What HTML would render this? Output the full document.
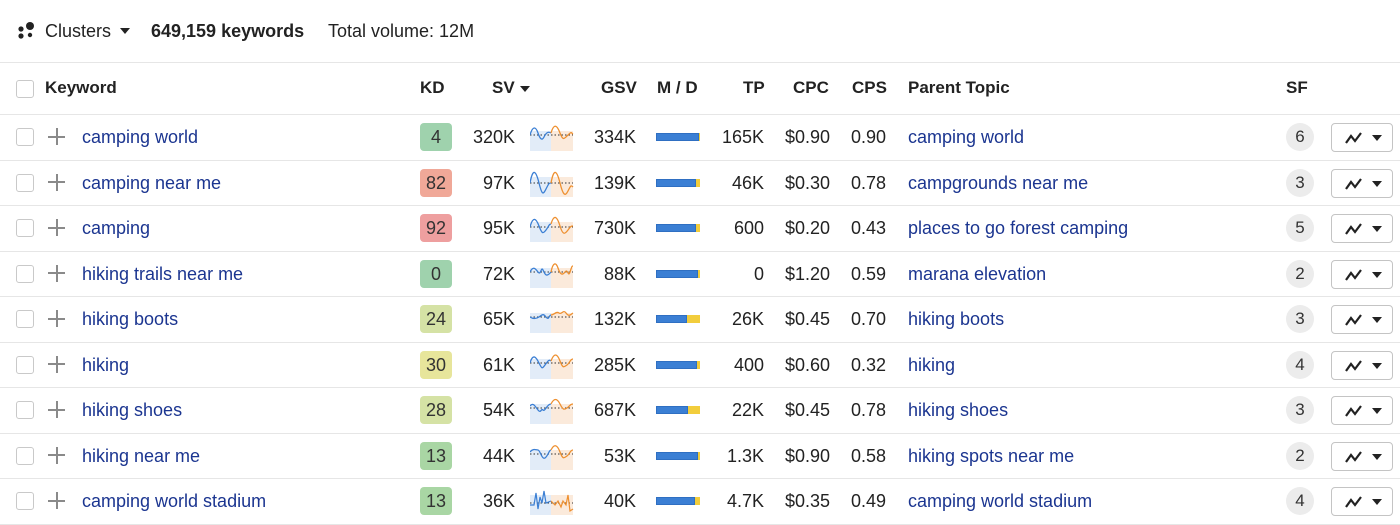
<!DOCTYPE html>
<html><head><meta charset="utf-8"><style>
*{margin:0;padding:0;box-sizing:border-box}
body{width:1400px;height:525px;background:#fff;font-family:"Liberation Sans",Arial,sans-serif;color:#222;position:relative;overflow:hidden;font-size:18px}
.a{position:absolute}
.top{top:0;left:0;width:1400px;height:63px;border-bottom:1px solid #e6e6e6}
.hdr{top:63px;left:0;width:1400px;height:52px;border-bottom:1px solid #e6e6e6;font-weight:bold;font-size:17px}
.row{left:0;width:1400px;height:45.5px;border-bottom:1px solid #e6e6e6}
.cb{left:16px;width:18px;height:18px;border:1px solid #c9c9c9;border-radius:3px;top:50%;margin-top:-9px}
.plus{left:48px;top:50%;margin-top:-9px;width:17px;height:17px}
.plus:before{content:"";position:absolute;left:0;top:7.5px;width:17px;height:2px;background:#8a8a8a}
.plus:after{content:"";position:absolute;left:7.5px;top:0;width:2px;height:17px;background:#8a8a8a}
.kw{left:82px;top:50%;margin-top:-11px;color:#1b3590;line-height:22px}
.kd{left:420px;width:32px;height:28px;top:50%;margin-top:-14px;border-radius:4px;text-align:center;line-height:28px;color:#333}
.r{text-align:right;top:50%;margin-top:-11px;line-height:22px}
.sv{left:445px;width:70px}
.gsv{left:566px;width:70px}
.tp{left:694px;width:70px}
.cpc{left:760px;width:70px}
.cps{left:826px;width:60px}
.sp{left:530px;top:50%;margin-top:-14px}
.bar{left:656px;top:50%;margin-top:-4px;width:44px;height:8px;background:#f2cd3c}
.bar i{display:block;height:8px;background:#3b7fd4;border:1px solid #2f6fc2}
.pt{left:908px;top:50%;margin-top:-11px;color:#1b3590;line-height:22px}
.sf{left:1286px;width:28px;height:28px;border-radius:50%;background:#ececec;top:50%;margin-top:-14px;text-align:center;line-height:28px;color:#333;font-size:17px}
.btn{left:1331px;width:62px;height:29px;top:50%;margin-top:-14px;border:1px solid #c4c4c4;border-radius:4px}
.btn svg{position:absolute;left:12px;top:7px}
.btn b{position:absolute;left:40px;top:11px;border-left:5px solid transparent;border-right:5px solid transparent;border-top:6px solid #222}
</style></head><body>
<div class="a top">
<svg class="a" style="left:17px;top:21px" width="20" height="18"><circle cx="13" cy="5" r="4" fill="#222"/><circle cx="4" cy="8" r="2.6" fill="#222"/><circle cx="4" cy="15" r="2.6" fill="#222"/><circle cx="13" cy="14" r="2.2" fill="#222"/></svg>
<div class="a" style="left:45px;top:20px;line-height:22px">Clusters</div>
<div class="a" style="left:120px;top:28px;border-left:5px solid transparent;border-right:5px solid transparent;border-top:6px solid #222"></div>
<div class="a" style="left:151px;top:20px;line-height:22px;font-weight:bold">649,159 keywords</div>
<div class="a" style="left:328px;top:20px;line-height:22px">Total volume: 12M</div>
</div>
<div class="a hdr">
<div class="a cb" style="top:26px"></div>
<div class="a" style="left:45px;top:15px;line-height:20px">Keyword</div>
<div class="a" style="left:420px;top:15px;line-height:20px">KD</div>
<div class="a" style="left:492px;top:15px;line-height:20px">SV</div>
<div class="a" style="left:520px;top:23px;border-left:5px solid transparent;border-right:5px solid transparent;border-top:6px solid #222"></div>
<div class="a" style="left:601px;top:15px;line-height:20px">GSV</div>
<div class="a" style="left:657px;top:15px;line-height:20px">M / D</div>
<div class="a" style="left:743px;top:15px;line-height:20px">TP</div>
<div class="a" style="left:793px;top:15px;line-height:20px">CPC</div>
<div class="a" style="left:852px;top:15px;line-height:20px">CPS</div>
<div class="a" style="left:908px;top:15px;line-height:20px">Parent Topic</div>
<div class="a" style="left:1286px;top:15px;line-height:20px">SF</div>
</div>

<div class="a row" style="top:115px"><div class="a cb"></div><div class="a plus"></div><div class="a kw">camping world</div><div class="a kd" style="background:#9fd2ad">4</div><div class="a r sv">320K</div>
<svg class="a sp" width="44" height="28"><rect x="0" y="8" width="21" height="20" fill="#e2ecf8"/><rect x="21" y="8" width="22" height="20" fill="#fbeadb"/><path d="M0 12 L43 12" stroke="#333" stroke-dasharray="1.5 2" stroke-width="1"/><path d="M0 12 C3 2,6 4,8 10 S12 18,14 14 S18 8,21 10" fill="none" stroke="#3b7fd4" stroke-width="1.3"/><path d="M21 10 C24 0,27 2,30 10 S34 16,38 12 S41 10,43 11" fill="none" stroke="#ee9030" stroke-width="1.3"/></svg>
<div class="a r gsv">334K</div><div class="a bar"><i style="width:43px"></i></div><div class="a r tp">165K</div><div class="a r cpc">$0.90</div><div class="a r cps">0.90</div><div class="a pt">camping world</div><div class="a sf">6</div><div class="a btn"><svg width="20" height="14"><path d="M2 12 L7 5 L11 10 L17 2" fill="none" stroke="#222" stroke-width="2.2"/></svg><b></b></div></div>

<div class="a row" style="top:160.5px"><div class="a cb"></div><div class="a plus"></div><div class="a kw">camping near me</div><div class="a kd" style="background:#f0a898">82</div><div class="a r sv">97K</div>
<svg class="a sp" width="44" height="28"><rect x="0" y="8" width="21" height="20" fill="#e2ecf8"/><rect x="21" y="8" width="22" height="20" fill="#fbeadb"/><path d="M0 14 L43 14" stroke="#333" stroke-dasharray="1.5 2"/><path d="M0 14 C3 -2,6 2,9 14 S13 26,16 20 S19 14,21 14" fill="none" stroke="#3b7fd4" stroke-width="1.3"/><path d="M21 14 C24 -2,27 2,30 14 S35 28,38 22 S41 16,43 18" fill="none" stroke="#ee9030" stroke-width="1.3"/></svg>
<div class="a r gsv">139K</div><div class="a bar"><i style="width:40px"></i></div><div class="a r tp">46K</div><div class="a r cpc">$0.30</div><div class="a r cps">0.78</div><div class="a pt">campgrounds near me</div><div class="a sf">3</div><div class="a btn"><svg width="20" height="14"><path d="M2 12 L7 5 L11 10 L17 2" fill="none" stroke="#222" stroke-width="2.2"/></svg><b></b></div></div>

<div class="a row" style="top:206px"><div class="a cb"></div><div class="a plus"></div><div class="a kw">camping</div><div class="a kd" style="background:#ee9f9f">92</div><div class="a r sv">95K</div>
<svg class="a sp" width="44" height="28"><rect x="0" y="8" width="21" height="20" fill="#e2ecf8"/><rect x="21" y="8" width="22" height="20" fill="#fbeadb"/><path d="M0 13 L43 13" stroke="#333" stroke-dasharray="1.5 2"/><path d="M0 13 C3 2,6 4,9 12 S13 20,16 16 S19 10,21 10" fill="none" stroke="#3b7fd4" stroke-width="1.3"/><path d="M21 10 C24 0,27 2,30 12 S35 20,38 16 S41 12,43 12" fill="none" stroke="#ee9030" stroke-width="1.3"/></svg>
<div class="a r gsv">730K</div><div class="a bar"><i style="width:40px"></i></div><div class="a r tp">600</div><div class="a r cpc">$0.20</div><div class="a r cps">0.43</div><div class="a pt">places to go forest camping</div><div class="a sf">5</div><div class="a btn"><svg width="20" height="14"><path d="M2 12 L7 5 L11 10 L17 2" fill="none" stroke="#222" stroke-width="2.2"/></svg><b></b></div></div>

<div class="a row" style="top:251.5px"><div class="a cb"></div><div class="a plus"></div><div class="a kw">hiking trails near me</div><div class="a kd" style="background:#9fd2ad">0</div><div class="a r sv">72K</div>
<svg class="a sp" width="44" height="28"><rect x="0" y="8" width="21" height="20" fill="#e2ecf8"/><rect x="21" y="8" width="22" height="20" fill="#fbeadb"/><path d="M0 12 L43 12" stroke="#333" stroke-dasharray="1.5 2"/><path d="M0 12 C3 6,5 8,8 12 S11 6,13 10 S16 18,21 12" fill="none" stroke="#3b7fd4" stroke-width="1.3"/><path d="M21 12 C23 2,26 2,28 8 S32 16,35 12 S38 18,40 12 S42 6,43 6" fill="none" stroke="#ee9030" stroke-width="1.3"/></svg>
<div class="a r gsv">88K</div><div class="a bar"><i style="width:42px"></i></div><div class="a r tp">0</div><div class="a r cpc">$1.20</div><div class="a r cps">0.59</div><div class="a pt">marana elevation</div><div class="a sf">2</div><div class="a btn"><svg width="20" height="14"><path d="M2 12 L7 5 L11 10 L17 2" fill="none" stroke="#222" stroke-width="2.2"/></svg><b></b></div></div>

<div class="a row" style="top:297px"><div class="a cb"></div><div class="a plus"></div><div class="a kw">hiking boots</div><div class="a kd" style="background:#d5e2a5">24</div><div class="a r sv">65K</div>
<svg class="a sp" width="44" height="28"><rect x="0" y="8" width="21" height="20" fill="#e2ecf8"/><rect x="21" y="8" width="22" height="20" fill="#fbeadb"/><path d="M0 12 L43 12" stroke="#333" stroke-dasharray="1.5 2"/><path d="M0 12 C3 14,6 14,9 12 S13 8,16 12 S19 10,21 10" fill="none" stroke="#3b7fd4" stroke-width="1.3"/><path d="M21 10 C24 10,26 6,29 8 S33 4,36 8 S40 10,43 8" fill="none" stroke="#ee9030" stroke-width="1.3"/></svg>
<div class="a r gsv">132K</div><div class="a bar"><i style="width:31px"></i></div><div class="a r tp">26K</div><div class="a r cpc">$0.45</div><div class="a r cps">0.70</div><div class="a pt">hiking boots</div><div class="a sf">3</div><div class="a btn"><svg width="20" height="14"><path d="M2 12 L7 5 L11 10 L17 2" fill="none" stroke="#222" stroke-width="2.2"/></svg><b></b></div></div>

<div class="a row" style="top:342.5px"><div class="a cb"></div><div class="a plus"></div><div class="a kw">hiking</div><div class="a kd" style="background:#e7e59b">30</div><div class="a r sv">61K</div>
<svg class="a sp" width="44" height="28"><rect x="0" y="8" width="21" height="20" fill="#e2ecf8"/><rect x="21" y="8" width="22" height="20" fill="#fbeadb"/><path d="M0 12 L43 12" stroke="#333" stroke-dasharray="1.5 2"/><path d="M0 12 C3 2,6 6,9 12 S12 18,15 14 S19 8,21 10" fill="none" stroke="#3b7fd4" stroke-width="1.3"/><path d="M21 10 C24 2,27 2,30 10 S34 16,37 14 S40 8,43 8" fill="none" stroke="#ee9030" stroke-width="1.3"/></svg>
<div class="a r gsv">285K</div><div class="a bar"><i style="width:41px"></i></div><div class="a r tp">400</div><div class="a r cpc">$0.60</div><div class="a r cps">0.32</div><div class="a pt">hiking</div><div class="a sf">4</div><div class="a btn"><svg width="20" height="14"><path d="M2 12 L7 5 L11 10 L17 2" fill="none" stroke="#222" stroke-width="2.2"/></svg><b></b></div></div>

<div class="a row" style="top:388px"><div class="a cb"></div><div class="a plus"></div><div class="a kw">hiking shoes</div><div class="a kd" style="background:#d5e2a5">28</div><div class="a r sv">54K</div>
<svg class="a sp" width="44" height="28"><rect x="0" y="8" width="21" height="20" fill="#e2ecf8"/><rect x="21" y="8" width="22" height="20" fill="#fbeadb"/><path d="M0 12 L43 12" stroke="#333" stroke-dasharray="1.5 2"/><path d="M0 10 C3 6,5 10,8 14 S11 12,13 14 S17 8,21 8" fill="none" stroke="#3b7fd4" stroke-width="1.3"/><path d="M21 8 C24 2,27 2,30 8 S34 14,37 12 S40 8,43 8" fill="none" stroke="#ee9030" stroke-width="1.3"/></svg>
<div class="a r gsv">687K</div><div class="a bar"><i style="width:32px"></i></div><div class="a r tp">22K</div><div class="a r cpc">$0.45</div><div class="a r cps">0.78</div><div class="a pt">hiking shoes</div><div class="a sf">3</div><div class="a btn"><svg width="20" height="14"><path d="M2 12 L7 5 L11 10 L17 2" fill="none" stroke="#222" stroke-width="2.2"/></svg><b></b></div></div>

<div class="a row" style="top:433.5px"><div class="a cb"></div><div class="a plus"></div><div class="a kw">hiking near me</div><div class="a kd" style="background:#a9d6a4">13</div><div class="a r sv">44K</div>
<svg class="a sp" width="44" height="28"><rect x="0" y="8" width="21" height="20" fill="#e2ecf8"/><rect x="21" y="8" width="22" height="20" fill="#fbeadb"/><path d="M0 12 L43 12" stroke="#333" stroke-dasharray="1.5 2"/><path d="M0 10 C3 6,6 8,8 8 S12 18,15 16 S19 8,21 8" fill="none" stroke="#3b7fd4" stroke-width="1.3"/><path d="M21 8 C24 2,27 2,30 10 S34 16,37 14 S40 8,43 8" fill="none" stroke="#ee9030" stroke-width="1.3"/></svg>
<div class="a r gsv">53K</div><div class="a bar"><i style="width:42px"></i></div><div class="a r tp">1.3K</div><div class="a r cpc">$0.90</div><div class="a r cps">0.58</div><div class="a pt">hiking spots near me</div><div class="a sf">2</div><div class="a btn"><svg width="20" height="14"><path d="M2 12 L7 5 L11 10 L17 2" fill="none" stroke="#222" stroke-width="2.2"/></svg><b></b></div></div>

<div class="a row" style="top:479px"><div class="a cb"></div><div class="a plus"></div><div class="a kw">camping world stadium</div><div class="a kd" style="background:#a9d6a4">13</div><div class="a r sv">36K</div>
<svg class="a sp" width="44" height="28"><rect x="0" y="8" width="21" height="20" fill="#e2ecf8"/><rect x="21" y="8" width="22" height="20" fill="#fbeadb"/><path d="M0 16 L43 16" stroke="#333" stroke-dasharray="1.5 2"/><path d="M0 18 L4 18 L6 6 L8 22 L10 10 L12 16 L14 4 L16 16 L21 14" fill="none" stroke="#3b7fd4" stroke-width="1.2"/><path d="M21 14 L25 18 L28 14 L31 20 L33 14 L36 18 L38 8 L40 24 L43 22" fill="none" stroke="#ee9030" stroke-width="1.2"/></svg>
<div class="a r gsv">40K</div><div class="a bar"><i style="width:39px"></i></div><div class="a r tp">4.7K</div><div class="a r cpc">$0.35</div><div class="a r cps">0.49</div><div class="a pt">camping world stadium</div><div class="a sf">4</div><div class="a btn"><svg width="20" height="14"><path d="M2 12 L7 5 L11 10 L17 2" fill="none" stroke="#222" stroke-width="2.2"/></svg><b></b></div></div>
</body></html>
